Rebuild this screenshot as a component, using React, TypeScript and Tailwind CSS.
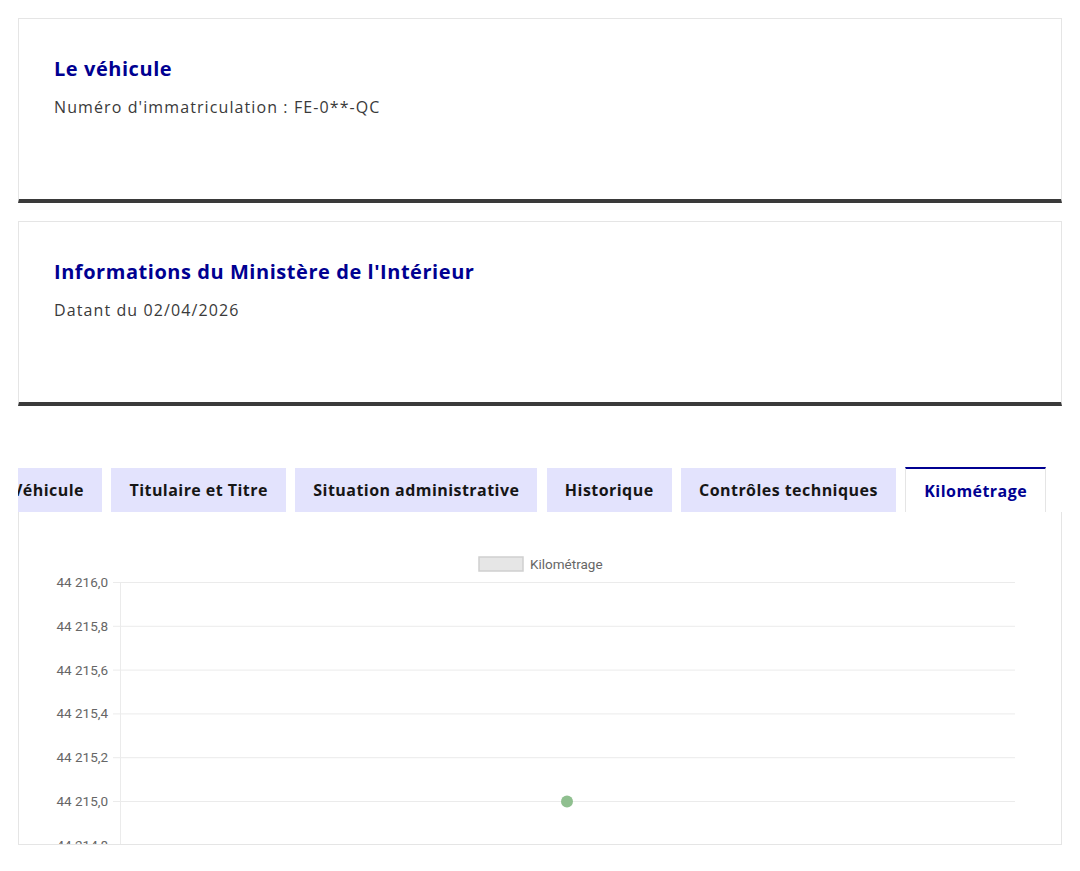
import React from "react";

const font = { fontFamily: '"Open Sans", "Liberation Sans", sans-serif' };

const InfoCard: React.FC<{ title: string; text: string }> = ({ title, text }) => (
  <div className="h-[185px] border border-[#e5e5e5] border-b-4 border-b-[#3a3a3a] pl-[35px] pt-[36px]">
    <h3 className="text-[20px] leading-[28px] font-bold text-[#000091] tracking-[0.55px]">{title}</h3>
    <p className="mt-[12px] text-[16px] leading-[24px] text-[#3a3a3a] tracking-[1.1px]">{text}</p>
  </div>
);

const tabs = ["Véhicule", "Titulaire et Titre", "Situation administrative", "Historique", "Contrôles techniques"];

const yLabels = ["44 216,0", "44 215,8", "44 215,6", "44 215,4", "44 215,2", "44 215,0", "44 214,8"];

const Chart: React.FC = () => (
  <svg width="1042" height="333" className="block">
    <g fontFamily="Roboto, 'Liberation Sans', sans-serif" fontSize="13.5" fill="#666">
      <rect x="460" y="45" width="44" height="14" fill="#e6e6e6" stroke="#cfcfcf" strokeWidth="1.5" />
      <text x="511" y="57">Kilométrage</text>
      {yLabels.map((l, i) => (
        <g key={l}>
          <line x1="94" x2="996" y1={70.5 + i * 43.8} y2={70.5 + i * 43.8} stroke="#ebebeb" strokeWidth="1" />
          <text x="89" y={75 + i * 43.8} textAnchor="end">{l}</text>
        </g>
      ))}
      <line x1="101.5" x2="101.5" y1="70" y2="333" stroke="#ebebeb" strokeWidth="1" />
      <circle cx="548" cy="289.5" r="6" fill="#8fbf8f" />
    </g>
  </svg>
);

export default function App() {
  return (
    <div className="bg-white min-h-[871px] px-[18px] pt-[18px] text-[#161616]" style={font}>
      <InfoCard title="Le véhicule" text="Numéro d'immatriculation : FE-0**-QC" />
      <div className="mt-[18px]">
        <InfoCard title="Informations du Ministère de l'Intérieur" text="Datant du 02/04/2026" />
      </div>

      <div className="mt-[61px] overflow-hidden">
        <div className="flex items-end gap-[9.5px] ml-[-24px]">
          {tabs.map((t) => (
            <div key={t} className="h-[44px] px-[18px] flex items-center bg-[#e3e3fd] text-[16px] font-bold text-[#161616] tracking-[0.45px] whitespace-nowrap">
              {t}
            </div>
          ))}
          <div className="h-[45px] px-[18px] flex items-center bg-white border-t-2 border-t-[#000091] border-x border-x-[#e5e5e5] text-[16px] font-bold text-[#000091] tracking-[0.45px] whitespace-nowrap">
            Kilométrage
          </div>
        </div>
      </div>
      <div className="h-[333px] border border-[#e5e5e5] border-t-0 overflow-hidden">
        <Chart />
      </div>
    </div>
  );
}
